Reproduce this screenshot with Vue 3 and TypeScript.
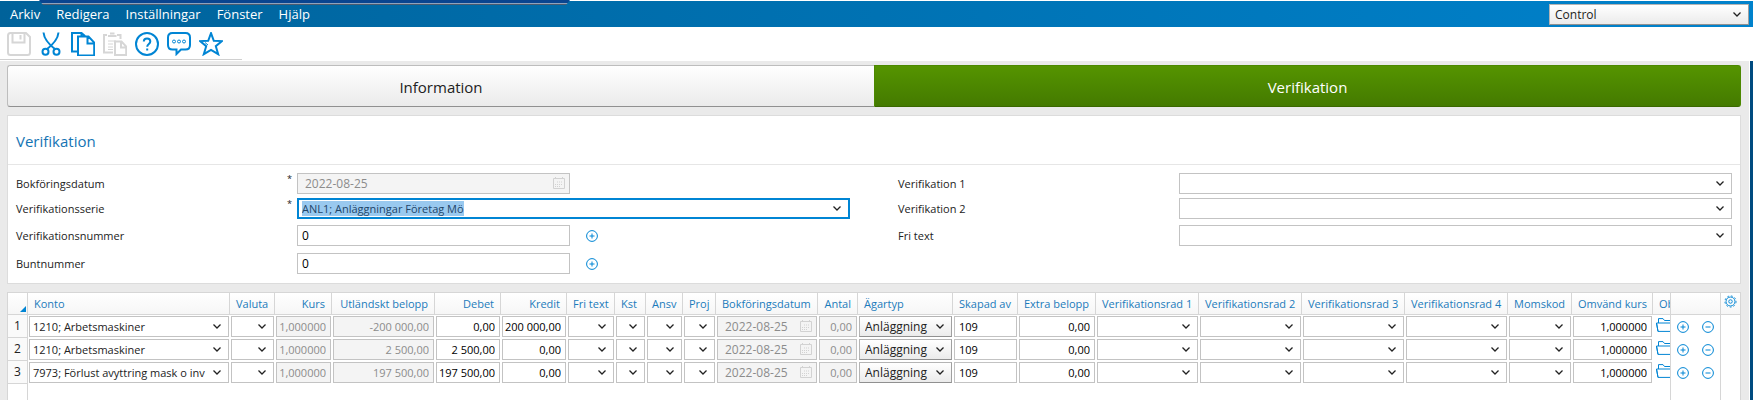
<script setup lang="ts">
import { onMounted, ref } from 'vue'

type Kind = 'combo' | 'number' | 'locked' | 'date' | 'choice' | 'text' | 'folder'

interface Column {
  key: string
  label: string
  kind: Kind
  width: number | null
}

const columns: Column[] = [
  { key: 'konto', label: 'Konto', kind: 'combo', width: 202 },
  { key: 'valuta', label: 'Valuta', kind: 'combo', width: 45 },
  { key: 'kurs', label: 'Kurs', kind: 'locked', width: 57 },
  { key: 'utl', label: 'Utländskt belopp', kind: 'locked', width: 103 },
  { key: 'debet', label: 'Debet', kind: 'number', width: 66 },
  { key: 'kredit', label: 'Kredit', kind: 'number', width: 66 },
  { key: 'fritext', label: 'Fri text', kind: 'combo', width: 48 },
  { key: 'kst', label: 'Kst', kind: 'combo', width: 31 },
  { key: 'ansv', label: 'Ansv', kind: 'combo', width: 37 },
  { key: 'proj', label: 'Proj', kind: 'combo', width: 33 },
  { key: 'datum', label: 'Bokföringsdatum', kind: 'date', width: 102 },
  { key: 'antal', label: 'Antal', kind: 'locked', width: 40 },
  { key: 'agartyp', label: 'Ägartyp', kind: 'choice', width: 95 },
  { key: 'skapad', label: 'Skapad av', kind: 'text', width: 65 },
  { key: 'extra', label: 'Extra belopp', kind: 'number', width: 78 },
  { key: 'v1', label: 'Verifikationsrad 1', kind: 'combo', width: 103 },
  { key: 'v2', label: 'Verifikationsrad 2', kind: 'combo', width: 103 },
  { key: 'v3', label: 'Verifikationsrad 3', kind: 'combo', width: 103 },
  { key: 'v4', label: 'Verifikationsrad 4', kind: 'combo', width: 103 },
  { key: 'moms', label: 'Momskod', kind: 'combo', width: 64 },
  { key: 'omvand', label: 'Omvänd kurs', kind: 'number', width: 81 },
  { key: 'objekt', label: 'Objekt', kind: 'folder', width: null },
]

const common: Record<string, string> = {
  kurs: '1,000000',
  datum: '2022-08-25',
  antal: '0,00',
  agartyp: 'Anläggning',
  skapad: '109',
  extra: '0,00',
  omvand: '1,000000',
}

const rows: Record<string, string>[] = [
  { ...common, konto: '1210; Arbetsmaskiner', utl: '-200 000,00', debet: '0,00', kredit: '200 000,00' },
  { ...common, konto: '1210; Arbetsmaskiner', utl: '2 500,00', debet: '2 500,00', kredit: '0,00' },
  { ...common, konto: '7973; Förlust avyttring mask o inv', utl: '197 500,00', debet: '197 500,00', kredit: '0,00' },
]

const menus = ['Arkiv', 'Redigera', 'Inställningar', 'Fönster', 'Hjälp']
const isRight = (k: Kind) => k === 'number' || k === 'locked'

const series = ref<HTMLInputElement | null>(null)
onMounted(() => {
  series.value?.focus()
  series.value?.select()
})
</script>

<template>
  <div class="app">
    <header class="menubar">
      <nav class="menus">
        <button v-for="m in menus" :key="m" type="button">{{ m }}</button>
      </nav>
      <span class="combo raised company">
        <select aria-label="Företag"><option>Control</option></select>
        <svg class="chev" viewBox="0 0 8 5"><path d="M0.5 0.5 4 4 7.5 0.5" /></svg>
      </span>
      <div class="window-tab"></div>
    </header>

    <div class="toolbar">
      <div class="tools">
        <button type="button" class="off" aria-label="Spara">
          <svg viewBox="0 0 24 24"><path d="M1 3.500Q1 1 3.500 1H19L23 5V20.500Q23 23 20.500 23H3.500Q1 23 1 20.500ZM5.500 1V10.500H17.500V1M13.500 3V7.500" /></svg>
        </button>
        <button type="button" aria-label="Klipp ut">
          <svg viewBox="0 0 24 24"><path d="M4.500 0.500C5 6 8 11 16.500 17.500M19.500 0.500C19 6 16 11 7.500 17.500" /><circle cx="6.500" cy="19.800" r="3" /><circle cx="17.500" cy="19.800" r="3" /></svg>
        </button>
        <button type="button" aria-label="Kopiera">
          <svg viewBox="0 0 24 24"><path d="M6 19.500H1V1H10.500L14 4M10.500 1V4M7 4.500H17.500L23.200 10.500V23.500H7ZM16.500 4.500V11.500H23.200" /></svg>
        </button>
        <button type="button" class="off" aria-label="Klistra in">
          <svg viewBox="0 0 24 24"><path d="M4 3H1V20.500H10M14 3H17.500V7" /><path d="M5 4H13.500M7 1.500H11.500" /><path class="thin" d="M5 9H13M5 12H10M5 15H10M5 17.500H10" /><path d="M12 9.500H18.500L23.200 14.500V23H12ZM18 9.500V15.500H23" /></svg>
        </button>
        <button type="button" aria-label="Hjälp">
          <svg viewBox="0 0 24 24"><circle cx="12" cy="12" r="11" /><path d="M8.800 9.500C8.800 5.500 15.300 5.500 15.300 9.500C15.300 12 12.200 12 12.200 14.800M12.200 16.500V18.500" /></svg>
        </button>
        <button type="button" aria-label="Meddelande">
          <svg viewBox="0 0 24 24"><path d="M5.500 1H18.500Q23 1 23 5.500V13Q23 17.500 18.500 17.500H14L9.500 22V17.500H5.500Q1 17.500 1 13V5.500Q1 1 5.500 1Z" /><g class="thin"><circle cx="7" cy="9.500" r="1.500" /><circle cx="12" cy="9.500" r="1.500" /><circle cx="17" cy="9.500" r="1.500" /></g></svg>
        </button>
        <button type="button" aria-label="Favorit">
          <svg viewBox="0 0 24 24"><path d="M12 1.200 14.800 8.800 23 9.100 16.800 14.200 19.200 22.200 12 17.800 4.800 22.200 7.200 14.200 1 9.100 9.200 8.800Z" /><path class="thin" d="M6 10.500 9 13" /></svg>
        </button>
      </div>
    </div>

    <div class="body">
      <main class="page">
        <div class="tabs" role="tablist">
          <button type="button" role="tab" aria-selected="false">Information</button>
          <button type="button" role="tab" aria-selected="true" class="active">Verifikation</button>
        </div>

        <section class="panel">
          <h2>Verifikation</h2>
          <form class="form" @submit.prevent>
            <label for="datum">Bokföringsdatum<sup>*</sup></label>
            <div class="half date">
              <input id="datum" class="box" value="2022-08-25" disabled />
              <svg class="cal" viewBox="0 0 12 12"><path d="M0.500 1.500H11.500V11.500H0.500ZM2.500 0V2M9.500 0V2" /><path class="dots" d="M4 5H10M2 7.500H10M2 9.500H8" /></svg>
            </div>
            <label for="v1" class="right">Verifikation 1</label>
            <span class="combo"><select id="v1"></select><svg class="chev" viewBox="0 0 8 5"><path d="M0.5 0.5 4 4 7.5 0.5" /></svg></span>

            <label for="serie">Verifikationsserie<sup>*</sup></label>
            <span class="combo focus">
              <input id="serie" ref="series" role="combobox" aria-expanded="false" value="ANL1; Anläggningar Företag Mö" spellcheck="false" />
              <svg class="chev" viewBox="0 0 8 5"><path d="M0.5 0.5 4 4 7.5 0.5" /></svg>
            </span>
            <label for="v2" class="right">Verifikation 2</label>
            <span class="combo"><select id="v2"></select><svg class="chev" viewBox="0 0 8 5"><path d="M0.5 0.5 4 4 7.5 0.5" /></svg></span>

            <label for="vnr">Verifikationsnummer</label>
            <div class="with-add">
              <input id="vnr" class="box half" value="0" />
              <button type="button" class="round" aria-label="Nytt verifikationsnummer"><svg viewBox="0 0 12 12"><circle cx="6" cy="6" r="5.400" /><path d="M3.500 6H8.500M6 3.500V8.500" /></svg></button>
            </div>
            <label for="fri" class="right">Fri text</label>
            <span class="combo"><select id="fri"></select><svg class="chev" viewBox="0 0 8 5"><path d="M0.5 0.5 4 4 7.5 0.5" /></svg></span>

            <label for="bnr">Buntnummer</label>
            <div class="with-add">
              <input id="bnr" class="box half" value="0" />
              <button type="button" class="round" aria-label="Nytt buntnummer"><svg viewBox="0 0 12 12"><circle cx="6" cy="6" r="5.400" /><path d="M3.500 6H8.500M6 3.500V8.500" /></svg></button>
            </div>
          </form>
        </section>

        <div class="grid">
          <table>
            <colgroup>
              <col class="c-num" />
              <col v-for="c in columns" :key="c.key" :style="c.width ? { width: c.width + 'px' } : undefined" />
              <col class="c-act" />
              <col class="c-gear" />
            </colgroup>
            <thead>
              <tr>
                <th class="corner"><svg viewBox="0 0 6 6"><path d="M6 0V6H0Z" /></svg></th>
                <th v-for="c in columns" :key="c.key" :class="{ end: isRight(c.kind) }">{{ c.label }}</th>
                <th class="act-head"></th>
                <th class="gear">
                  <button type="button" aria-label="Kolumner">
                    <svg viewBox="0 0 14 14"><circle class="teeth" cx="7" cy="7" r="6" /><circle cx="7" cy="7" r="4.800" /><circle cx="7" cy="7" r="1.900" /></svg>
                  </button>
                </th>
              </tr>
            </thead>
            <tbody>
              <tr v-for="(r, i) in rows" :key="i">
                <th class="num">{{ i + 1 }}</th>
                <td v-for="c in columns" :key="c.key" :class="{ folder: c.kind === 'folder' }">
                  <span v-if="c.kind === 'combo' || c.kind === 'choice'" class="combo" :class="{ raised: c.kind === 'choice' }">
                    <select :aria-label="c.label"><option v-if="r[c.key]">{{ r[c.key] }}</option></select>
                    <svg class="chev" viewBox="0 0 8 5"><path d="M0.5 0.5 4 4 7.5 0.5" /></svg>
                  </span>
                  <div v-else-if="c.kind === 'date'" class="date">
                    <input class="box" :value="r[c.key]" :aria-label="c.label" disabled />
                    <svg class="cal" viewBox="0 0 12 12"><path d="M0.500 1.500H11.500V11.500H0.500ZM2.500 0V2M9.500 0V2" /><path class="dots" d="M4 5H10M2 7.500H10M2 9.500H8" /></svg>
                  </div>
                  <button v-else-if="c.kind === 'folder'" type="button" :aria-label="c.label">
                    <svg viewBox="0 0 20 14"><path d="M2.500 5V0.600H7L8.500 2.500H17V5M0.500 5H18.500L17 13.400H2ZM0.500 5L2 13.400" /></svg>
                  </button>
                  <input v-else class="box" :class="{ end: isRight(c.kind) }" :value="r[c.key]" :aria-label="c.label" :disabled="c.kind === 'locked'" />
                </td>
                <td class="act">
                  <div>
                    <button type="button" class="round" aria-label="Lägg till rad"><svg viewBox="0 0 12 12"><circle cx="6" cy="6" r="5.400" /><path d="M3.500 6H8.500M6 3.500V8.500" /></svg></button>
                    <button type="button" class="round" aria-label="Ta bort rad"><svg viewBox="0 0 12 12"><circle cx="6" cy="6" r="5.400" /><path d="M3.500 6H8.500" /></svg></button>
                  </div>
                </td>
                <td class="side"></td>
              </tr>
              <tr class="rest">
                <th class="num"></th>
                <td :colspan="columns.length"></td>
                <td class="act"></td>
                <td class="side"></td>
              </tr>
            </tbody>
          </table>
        </div>
      </main>
      <div class="desktop-edge"></div>
    </div>
  </div>
</template>

<style>
body {
  margin: 0;
}
</style>

<style scoped>
.app {
  display: flex;
  flex-direction: column;
  min-height: 100vh;
  background: #fff;
  color: #222;
  font: 12px/16px "Open Sans", "Noto Sans", sans-serif;
}
.app *,
.app *::before {
  box-sizing: border-box;
}
button,
input,
select {
  margin: 0;
  padding: 0;
  border: 0;
  border-radius: 0;
  background: none;
  color: inherit;
  font: inherit;
  outline: 0;
}
svg {
  display: block;
  fill: none;
  stroke: #0085d4;
}

/* Menu bar */
.menubar {
  position: relative;
  display: flex;
  justify-content: space-between;
  align-items: flex-start;
  height: 27px;
  padding: 3px 4px 0 10px;
  border-top: 1px solid #fff;
  background: linear-gradient(90deg, #00629a, #0082cc);
}
.menus {
  display: flex;
  gap: 16px;
  color: #fff;
  font-size: 13px;
  line-height: 20px;
}
.window-tab {
  position: absolute;
  top: -1px;
  left: 39px;
  width: 531px;
  height: 5px;
  background: linear-gradient(#0a4590 3px, #8fa3bd 3px, #8fa3bd 4px, #4a5a70 4px);
  clip-path: polygon(0 0, 100% 0, calc(100% - 4px) 100%, 4px 100%);
}
.combo {
  position: relative;
  display: block;
  height: 21px;
  border: 1px solid #c3c3c3;
  background: #fff;
}
.combo select,
.combo input {
  display: block;
  width: 100%;
  height: 100%;
  padding: 0 22px 0 3px;
  appearance: none;
}
.chev {
  position: absolute;
  right: 7px;
  top: 7px;
  width: 8px;
  height: 5px;
  pointer-events: none;
  stroke: #222;
  stroke-width: 1.3;
}
.raised {
  border-color: #b4b4b4 #a0a0a0 #909090 #b4b4b4;
  background: linear-gradient(#fff, #ebebeb);
}
.company {
  width: 200px;
}
.company select {
  padding-left: 5px;
}

/* Toolbar */
.toolbar {
  height: 34px;
}
.tools {
  display: flex;
  align-items: flex-start;
  gap: 8px;
  width: 242px;
  height: 33px;
  padding: 5px 0 0 7px;
  border-bottom: 1px solid #d0d0d0;
}
.tools svg {
  width: 24px;
  height: 24px;
  stroke-width: 2;
}
.tools .off svg {
  stroke: #d6d6d6;
}
.tools .thin {
  stroke-width: 1;
}

/* Page */
.body {
  flex: 1;
  display: flex;
}
.page {
  flex: 1;
  min-width: 0;
  display: flex;
  flex-direction: column;
  padding: 4px 8px 0 7px;
  border-right: 1px solid #fff;
  background: #eaeaea;
}
.desktop-edge {
  width: 3px;
  background: #004b80;
}
.tabs {
  display: grid;
  grid-template-columns: 1fr 1fr;
  margin-bottom: 8px;
}
.tabs button {
  height: 42px;
  padding-top: 2px;
  border: 1px solid #bdbdbd;
  border-bottom-color: #909090;
  border-right: 0;
  border-radius: 3px 0 0 3px;
  background: linear-gradient(#fff, #ebebeb);
  font-size: 15px;
}
.tabs .active {
  border: 1px solid #4c8800;
  border-bottom-color: #3a6800;
  border-radius: 0 3px 3px 0;
  background: linear-gradient(#559400, #447a00);
  color: #fff;
}
.panel {
  margin-bottom: 8px;
  padding-bottom: 9px;
  border: 1px solid #dcdcdc;
  background: #fff;
}
h2 {
  margin: 0 0 8px;
  padding: 15px 8px 13px;
  border-bottom: 1px solid #e6e6e6;
  color: #1474b4;
  font-size: 15px;
  font-weight: 400;
  line-height: 20px;
}
.form {
  display: grid;
  grid-template-columns: 281px 1fr 329px 1fr;
  grid-template-rows: 25px 27px 28px 21px;
  align-items: start;
  padding: 0 8px;
}
label {
  display: flex;
  justify-content: space-between;
  padding-right: 5px;
  font-size: 11px;
  line-height: 21px;
}
label.right {
  margin-left: 48px;
}
sup {
  line-height: 12px;
  vertical-align: top;
}
.half {
  width: 273px;
}
.box {
  display: block;
  width: 100%;
  height: 21px;
  padding: 0 4px;
  border: 1px solid #c3c3c3;
  background: #fff;
  color: #000;
}
.box.half {
  width: 273px;
}
.box.end {
  padding-left: 0;
}
.box:disabled {
  background: #f4f4f4;
  color: #8c8c8c;
}
.date {
  position: relative;
}
.date .box {
  padding-left: 7px;
}
.cal {
  position: absolute;
  right: 5px;
  top: 4px;
  width: 12px;
  height: 12px;
  stroke: #d2d2d2;
}
.cal .dots {
  stroke-dasharray: 1 1;
}
.focus {
  border: 2px solid #0085d4;
  font-size: 11px;
}
.focus .chev {
  top: 6px;
}
.focus input::selection {
  background: #99c9ef;
  color: #1f4568;
}
.with-add {
  display: flex;
  align-items: center;
  gap: 16px;
}
.round svg {
  width: 12px;
  height: 12px;
}

/* Row grid */
.grid {
  flex: 1;
  display: grid;
  border: 1px solid #d6d6d6;
  border-bottom: 0;
  background: #fff;
  font-size: 11px;
}
table {
  width: 100%;
  height: 100%;
  border-collapse: separate;
  border-spacing: 0;
  table-layout: fixed;
}
.c-num {
  width: 20px;
}
.c-act {
  width: 51px;
}
.c-gear {
  width: 19px;
}
th {
  padding: 0;
  font-weight: 400;
}
thead th {
  height: 22px;
  padding: 0 6px;
  overflow: hidden;
  border-right: 1px solid #d6d6d6;
  border-bottom: 1px solid #d6d6d6;
  background: linear-gradient(#fff, #f6f6f6);
  color: #1b7bbb;
  text-align: left;
  white-space: nowrap;
}
thead th:nth-last-child(3) {
  border-right: 0;
}
thead th.act-head {
  border-left: 1px solid #d6d6d6;
}
thead th.end {
  text-align: right;
}
thead th.corner {
  padding: 10px 1px 0 12px;
}
.corner svg {
  width: 6px;
  height: 6px;
  fill: #0085d4;
  stroke: none;
}
thead th.gear {
  padding: 0 3px;
  border-right: 0;
}
.gear svg {
  width: 13px;
  height: 13px;
}
.gear .teeth {
  stroke-dasharray: 2 2;
}
tbody tr {
  height: 23px;
}
tbody tr.rest {
  height: auto;
}
.num {
  border-right: 1px solid #d6d6d6;
  border-bottom: 1px solid #d6d6d6;
  background: #fafafa;
  font-size: 12px;
}
.rest .num {
  border-bottom: 0;
  background: #fff;
}
td {
  padding: 1px;
  overflow: hidden;
}
td.folder {
  padding: 1px 0 1px 3px;
}
td.act {
  padding: 0;
  border-left: 1px solid #d6d6d6;
  border-right: 1px solid #d6d6d6;
}
.act div {
  display: flex;
  gap: 13px;
  padding-left: 6px;
}
.folder svg {
  width: 20px;
  height: 14px;
}
.end {
  text-align: right;
}
td .date .box,
td .raised select {
  font-size: 12px;
}
td .raised select {
  padding: 0 0 0 5px;
}
</style>
